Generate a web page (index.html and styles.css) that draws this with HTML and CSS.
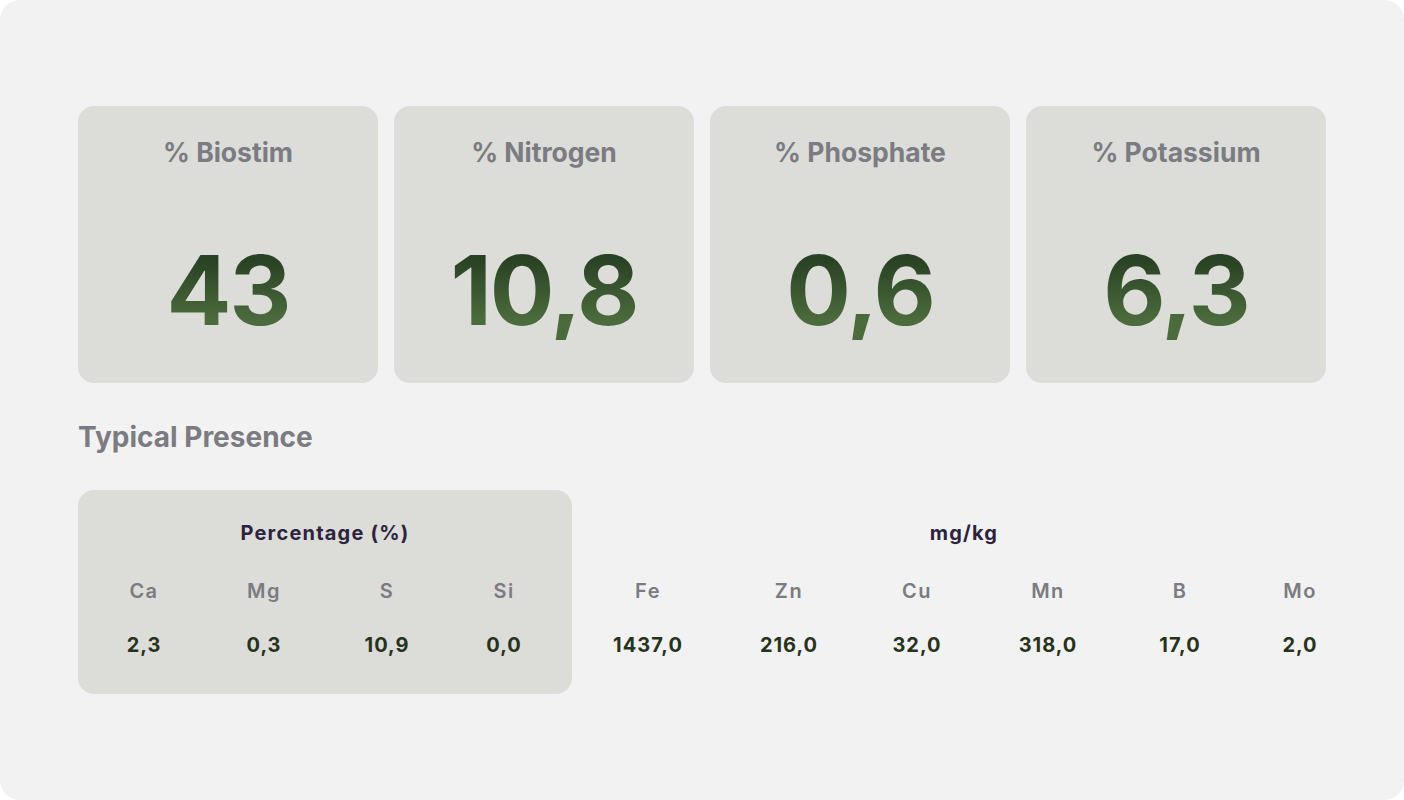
FILE: index.html
```html
<!DOCTYPE html>
<html lang="en">
<head>
<meta charset="utf-8">
<title>Composition</title>
<link rel="stylesheet" href="styles.css">
</head>
<body>
<div class="page">
  <div class="cards">
    <div class="card">
      <div class="card-title">% Biostim</div>
      <div class="card-value">43</div>
    </div>
    <div class="card">
      <div class="card-title">% Nitrogen</div>
      <div class="card-value">10,8</div>
    </div>
    <div class="card">
      <div class="card-title">% Phosphate</div>
      <div class="card-value">0,6</div>
    </div>
    <div class="card">
      <div class="card-title">% Potassium</div>
      <div class="card-value">6,3</div>
    </div>
  </div>

  <h2 class="section-title">Typical Presence</h2>

  <div class="presence">
    <div class="group group-pct">
      <div class="group-title">Percentage (%)</div>
      <div class="grid grid-pct">
        <div class="label">Ca</div>
        <div class="label">Mg</div>
        <div class="label">S</div>
        <div class="label">Si</div>
        <div class="value">2,3</div>
        <div class="value">0,3</div>
        <div class="value">10,9</div>
        <div class="value">0,0</div>
      </div>
    </div>
    <div class="group group-mg">
      <div class="group-title">mg/kg</div>
      <div class="grid grid-mg">
        <div class="label">Fe</div>
        <div class="label">Zn</div>
        <div class="label">Cu</div>
        <div class="label">Mn</div>
        <div class="label">B</div>
        <div class="label">Mo</div>
        <div class="value">1437,0</div>
        <div class="value">216,0</div>
        <div class="value">32,0</div>
        <div class="value">318,0</div>
        <div class="value">17,0</div>
        <div class="value">2,0</div>
      </div>
    </div>
  </div>
</div>
</body>
</html>
```

FILE: styles.css
```css
* { box-sizing: border-box; }

html, body {
  margin: 0;
  padding: 0;
  background: #ffffff;
}

body {
  font-family: "Inter", "Liberation Sans", sans-serif;
}

.page {
  width: 1404px;
  height: 800px;
  background: #f2f2f2;
  border-radius: 20px;
  padding: 106px 78px 0;
}

.cards {
  display: flex;
  gap: 16px;
}

.card {
  width: 300px;
  height: 277px;
  background: #dcdcd8;
  border-radius: 16px;
  padding-top: 31px;
  text-align: center;
}

.card-title {
  font-size: 26.5px;
  line-height: 30px;
  font-weight: 700;
  color: #7b7b82;
}

.card-value {
  margin-top: 73px;
  font-size: 96px;
  line-height: 100px;
  font-weight: 700;
  letter-spacing: -2px;
  background: linear-gradient(180deg, #2a4224 20%, #4b6b3d 80%);
  -webkit-background-clip: text;
  background-clip: text;
  color: transparent;
  display: inline-block;
}

.section-title {
  margin: 38px 0 37px;
  font-size: 28px;
  line-height: 32px;
  font-weight: 700;
  color: #7b7b82;
}

.presence {
  display: flex;
}

.group {
  flex-shrink: 0;
  padding: 30px 0 36px;
}

.group-pct {
  width: 494px;
  background: #dcdcd8;
  border-radius: 16px;
}

.group-mg {
  width: 784px;
}

.group-title {
  text-align: center;
  font-size: 20px;
  line-height: 26px;
  font-weight: 700;
  letter-spacing: 1.2px;
  color: #2d2340;
}

.grid {
  display: grid;
  margin-top: 32px;
  row-gap: 28px;
  justify-items: center;
}

.grid-pct {
  grid-template-columns: 132px 108px 138px 96px;
}

.grid-mg {
  grid-template-columns: 152px 130px 126px 136px 128px 112px;
}

.label {
  font-size: 20px;
  line-height: 26px;
  font-weight: 600;
  letter-spacing: 1.5px;
  color: #7b7b82;
}

.value {
  font-size: 20px;
  line-height: 26px;
  font-weight: 700;
  letter-spacing: 1px;
  color: #27331c;
}
```
